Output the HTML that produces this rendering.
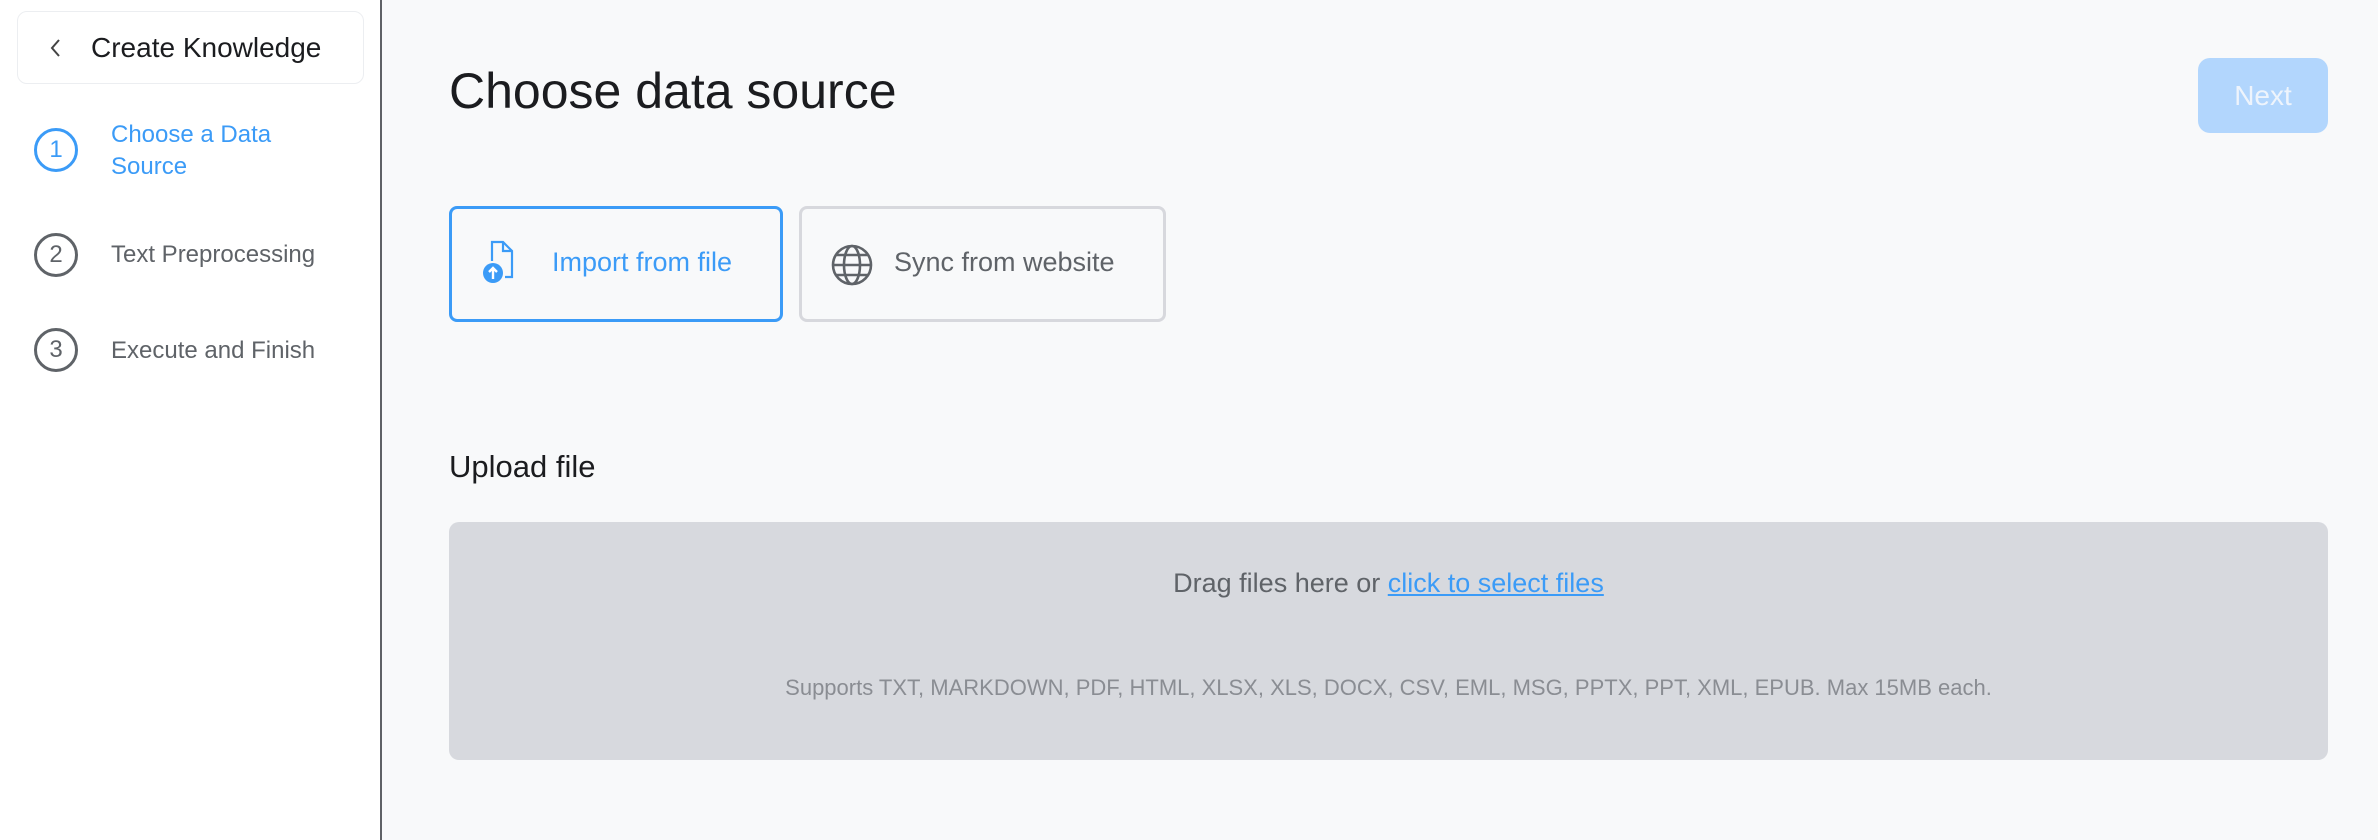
<!DOCTYPE html>
<html><head><style>
*{box-sizing:border-box;margin:0;padding:0}
body{width:2378px;height:840px;overflow:hidden;background:#f8f9fa;font-family:"Liberation Sans",sans-serif;position:relative}
.side{position:absolute;left:0;top:0;width:382px;height:840px;background:#fff;border-right:2px solid #5f6166}
.hdr{position:absolute;left:17px;top:11px;width:347px;height:73px;border:1px solid #eceef1;border-radius:10px;background:#fff}
.hdr span{position:absolute;left:73px;top:20px;font-size:28px;color:#1b1c1f}
.step{position:absolute;left:34px;width:44px;height:44px;border:3px solid #5f6368;border-radius:50%;font-size:24px;color:#5f6368;text-align:center;line-height:38px}
.st{position:absolute;left:111px;font-size:24px;color:#5f6368;line-height:32px}
.abs{position:absolute}
.card{position:absolute;top:206px;height:116px;border-radius:8px;background:#f8f9fa;font-size:27px}
</style></head><body>
<div class="side">
 <div class="hdr">
  <svg class="abs" style="left:30px;top:25px" width="16" height="22" viewBox="0 0 16 22"><path d="M11 3 L4 11 L11 19" fill="none" stroke="#444" stroke-width="2"/></svg>
  <span>Create Knowledge</span>
 </div>
 <div class="step" style="top:128px;border-color:#3b9bf7;color:#3b9bf7">1</div>
 <div class="st" style="top:119px;color:#3b9bf7">Choose a Data<br>Source</div>
 <div class="step" style="top:233px">2</div>
 <div class="st" style="top:239px">Text Preprocessing</div>
 <div class="step" style="top:328px">3</div>
 <div class="st" style="top:335px">Execute and Finish</div>
</div>
<div class="abs" style="left:449px;top:62px;font-size:50px;color:#1b1c1f">Choose data source</div>
<div class="abs" style="left:2198px;top:58px;width:130px;height:75px;background:#b2d6fd;border-radius:12px;color:#eef4fc;font-size:28px;text-align:center;line-height:75px">Next</div>
<div class="card" style="left:449px;width:334px;border:3px solid #3b9bf7;color:#3b9bf7">
 <svg class="abs" style="left:28px;top:30px" width="42" height="46" viewBox="0 0 42 46"><path d="M12 22 V3 H23 L32 12 V38 H25" fill="none" stroke="#3b9bf7" stroke-width="2.2"/><path d="M23 3 V12 H32" fill="none" stroke="#3b9bf7" stroke-width="2.2"/><circle cx="13" cy="34" r="10" fill="#3b9bf7"/><path d="M13 40 V29 M9 33 L13 29 L17 33" stroke="#fff" stroke-width="2.4" fill="none"/></svg>
 <span class="abs" style="left:100px;top:38px">Import from file</span>
</div>
<div class="card" style="left:799px;width:367px;border:3px solid #d7d8dd;color:#5f6368">
 <svg class="abs" style="left:28px;top:34px" width="44" height="44" viewBox="0 0 44 44" fill="none" stroke="#5f6368" stroke-width="2.6"><circle cx="22" cy="22" r="19"/><ellipse cx="22" cy="22" rx="8" ry="19"/><path d="M3 22 H41 M6 12 H38 M6 32 H38"/></svg>
 <span class="abs" style="left:92px;top:38px">Sync from website</span>
</div>
<div class="abs" style="left:449px;top:449px;font-size:31px;color:#1b1c1f">Upload file</div>
<div class="abs" style="left:449px;top:522px;width:1879px;height:238px;background:#d7d9de;border-radius:10px">
 <div class="abs" style="left:0;width:100%;top:46px;text-align:center;font-size:27px;color:#5f6368">Drag files here or <span style="color:#3b9bf7;text-decoration:underline">click to select files</span></div>
 <div class="abs" style="left:0;width:100%;top:153px;text-align:center;font-size:22px;color:#8a8d93">Supports TXT, MARKDOWN, PDF, HTML, XLSX, XLS, DOCX, CSV, EML, MSG, PPTX, PPT, XML, EPUB. Max 15MB each.</div>
</div>
</body></html>
